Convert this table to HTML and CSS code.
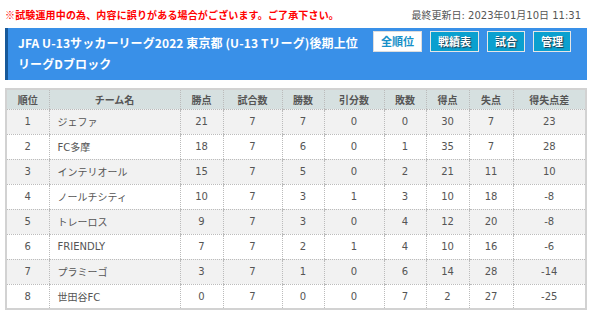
FILE: index.html
```html
<!DOCTYPE html>
<html lang="ja">
<head>
<meta charset="utf-8">
<link rel="stylesheet" href="styles.css">
</head>
<body>
<div class="page">
  <div class="topbar">
    <span class="notice">※試験運用中の為、内容に誤りがある場合がございます。ご了承下さい。</span>
    <span class="updated">最終更新日: 2023年01月10日 11:31</span>
  </div>
  <div class="header">
    <h1 class="title">JFA U-13サッカーリーグ2022 東京都 (U-13 Tリーグ)後期上位<br>リーグDブロック</h1>
    <nav class="nav">
      <a class="btn active">全順位</a>
      <a class="btn">戦績表</a>
      <a class="btn">試合</a>
      <a class="btn">管理</a>
    </nav>
  </div>
  <table class="standings">
    <colgroup>
      <col style="width:43px"><col style="width:131px"><col style="width:43px"><col style="width:59px"><col style="width:42px"><col style="width:60px"><col style="width:42px"><col style="width:43px"><col style="width:44px"><col>
    </colgroup>
    <thead>
      <tr><th>順位</th><th>チーム名</th><th>勝点</th><th>試合数</th><th>勝数</th><th>引分数</th><th>敗数</th><th>得点</th><th>失点</th><th>得失点差</th></tr>
    </thead>
    <tbody>
      <tr><td>1</td><td class="team">ジェファ</td><td>21</td><td>7</td><td>7</td><td>0</td><td>0</td><td>30</td><td>7</td><td>23</td></tr>
      <tr><td>2</td><td class="team">FC多摩</td><td>18</td><td>7</td><td>6</td><td>0</td><td>1</td><td>35</td><td>7</td><td>28</td></tr>
      <tr><td>3</td><td class="team">インテリオール</td><td>15</td><td>7</td><td>5</td><td>0</td><td>2</td><td>21</td><td>11</td><td>10</td></tr>
      <tr><td>4</td><td class="team">ノールチシティ</td><td>10</td><td>7</td><td>3</td><td>1</td><td>3</td><td>10</td><td>18</td><td>-8</td></tr>
      <tr><td>5</td><td class="team">トレーロス</td><td>9</td><td>7</td><td>3</td><td>0</td><td>4</td><td>12</td><td>20</td><td>-8</td></tr>
      <tr><td>6</td><td class="team">FRIENDLY</td><td>7</td><td>7</td><td>2</td><td>1</td><td>4</td><td>10</td><td>16</td><td>-6</td></tr>
      <tr><td>7</td><td class="team">プラミーゴ</td><td>3</td><td>7</td><td>1</td><td>0</td><td>6</td><td>14</td><td>28</td><td>-14</td></tr>
      <tr><td>8</td><td class="team">世田谷FC</td><td>0</td><td>7</td><td>0</td><td>0</td><td>7</td><td>2</td><td>27</td><td>-25</td></tr>
    </tbody>
  </table>
</div>
</body>
</html>
```
FILE: styles.css
```css
* { box-sizing: border-box; }
html, body { margin: 0; padding: 0; background: #fff; }
body {
  font-family: "Noto Sans CJK JP", "Noto Sans", sans-serif;
  color: #555;
}
.page {
  width: 582px;
  margin-left: 5px;
}
.topbar {
  display: flex;
  justify-content: space-between;
  align-items: center;
  height: 28px;
  padding-right: 6px;
}
.notice {
  color: #f00;
  font-size: 10px;
  font-weight: bold;
  letter-spacing: 0.15px;
}
.updated {
  font-family: "DejaVu Sans", "Noto Sans CJK JP", sans-serif;
  color: #555;
  font-size: 10px;
}
.header {
  display: flex;
  justify-content: space-between;
  align-items: flex-start;
  background: #3990e8;
  border-left: 3px solid #17599a;
  height: 52px;
  padding: 3px 16px 0 10px;
}
.title {
  flex: 1;
  margin: 0;
  padding-top: 1px;
  color: #fff;
  font-size: 12px;
  font-weight: bold;
  line-height: 21px;
  letter-spacing: 0.1px;
}
.nav {
  flex-shrink: 0;
  display: flex;
  gap: 8px;
}
.btn {
  display: block;
  height: 21px;
  line-height: 18px;
  padding: 0 7px;
  border: 1px solid #e6e6e6;
  background: #0aa0cf;
  color: #fff;
  font-size: 11px;
  font-weight: bold;
  text-shadow: 1px 1px 1px #234;
}
.btn.active {
  background: #fff;
  color: #1590c8;
  text-shadow: none;
  border-color: #ddd;
}
.standings {
  margin-top: 8px;
  width: 582px;
  border-collapse: collapse;
  table-layout: fixed;
  border: 2px solid #d2d2d2;
  font-family: "DejaVu Sans", "Noto Sans CJK JP", sans-serif;
  font-size: 10px;
}
.standings th {
  font-family: "Noto Sans CJK JP", sans-serif;
  background: #d6e0e0;
  color: #555;
  font-weight: bold;
  height: 20px;
  text-align: center;
  border-left: 1px dotted #bbb;
  border-bottom: 1px dotted #bbb;
  padding: 0;
}
.standings td {
  height: 25px;
  text-align: center;
  border-left: 1px dotted #bbb;
  border-bottom: 1px dotted #bbb;
  padding: 0;
  color: #555;
}
.standings td.team {
  text-align: left;
  padding-left: 8px;
}
.standings tbody tr:nth-child(odd) td { background: #f2f2f2; }
.standings tbody tr:nth-child(even) td { background: #fff; }
```
